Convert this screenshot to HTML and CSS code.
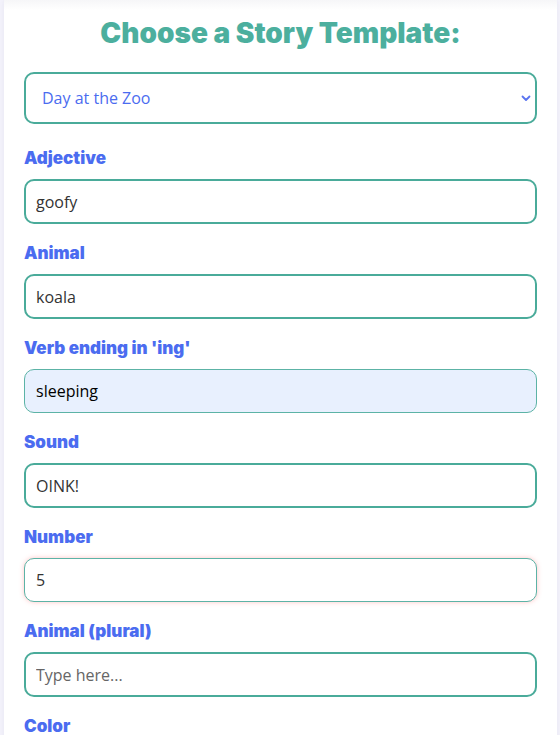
FILE: index.html
```html
<!DOCTYPE html>
<html lang="en">
<head>
  <meta charset="UTF-8">
  <title>Mad Libs</title>
  <link rel="stylesheet" href="styles.css">
</head>
<body>

  <div class="card">
    <h2 class="title">Choose a Story Template:</h2>

    <div class="select-wrap">
      <select id="template" class="template-select">
        <option>Day at the Zoo</option>
        <option>Space Adventure</option>
        <option>Pirate Treasure</option>
      </select>
      <svg class="chevron" width="10" height="7" viewBox="0 0 10 7">
        <path d="M1.5 1.5 L5 5 L8.5 1.5" fill="none" stroke="#5a74f0" stroke-width="1.8" stroke-linecap="round" stroke-linejoin="round"/>
      </svg>
    </div>

    <form id="words">
      <label for="adjective">Adjective</label>
      <input type="text" id="adjective" value="goofy" placeholder="Type here...">

      <label for="animal">Animal</label>
      <input type="text" id="animal" value="koala" placeholder="Type here...">

      <label for="verb">Verb ending in 'ing'</label>
      <input type="text" id="verb" class="autofilled" value="sleeping" placeholder="Type here...">

      <label for="sound">Sound</label>
      <input type="text" id="sound" value="OINK!" placeholder="Type here...">

      <label for="number">Number</label>
      <input type="text" id="number" class="focused" value="5" placeholder="Type here...">

      <label for="animals">Animal (plural)</label>
      <input type="text" id="animals" placeholder="Type here...">

      <label for="color">Color</label>
      <input type="text" id="color" placeholder="Type here...">
    </form>
  </div>

</body>
</html>
```

FILE: styles.css
```css
body {
  margin: 0;
  padding: 0 3px 0 4px;
  background: #f4f3fb;
  font-family: "Comic Sans MS", "Open Sans", sans-serif;
}
.card {
  background: linear-gradient(#f6f6f8, #ffffff 10px);
  padding: 14px 20px 30px;
  box-shadow: 0 0 6px rgba(80, 80, 140, 0.08);
}
.title {
  margin: 0 0 20px;
  text-align: center;
  font-family: Inter, sans-serif;
  font-weight: 900;
  font-size: 28px;
  line-height: 38px;
  color: #4caf9e;
}
.select-wrap {
  position: relative;
  margin-bottom: 5px;
}
.template-select {
  appearance: none;
  width: 100%;
  height: 52px;
  padding: 0 16px;
  border: 2px solid #4aab9a;
  border-radius: 10px;
  background: #fff;
  color: #4b6cf0;
  font-family: inherit;
  font-size: 16px;
  outline: none;
}
.chevron {
  position: absolute;
  right: 6px;
  top: 23px;
}
form {
  display: flex;
  flex-direction: column;
}
label {
  margin: 19px 0 10px;
  font-family: Inter, sans-serif;
  font-weight: 900;
  font-size: 17px;
  line-height: 21px;
  color: #4b6cf0;
}
input {
  height: 45px;
  box-sizing: border-box;
  padding: 0 10px;
  border: 2px solid #4aab9a;
  border-radius: 10px;
  background: #fff;
  color: #333;
  font-family: inherit;
  font-size: 16px;
  outline: none;
}
input::placeholder {
  color: #666;
}
.autofilled {
  height: 44px;
  padding: 0 11px;
  border: 1px solid #5cb3a6;
  background: #e8f0fe;
  color: #000;
}
.focused {
  height: 44px;
  padding: 0 11px;
  border: 1px solid #5cb3a6;
  box-shadow: 0 0 5px rgba(255, 90, 90, 0.35);
}
```
